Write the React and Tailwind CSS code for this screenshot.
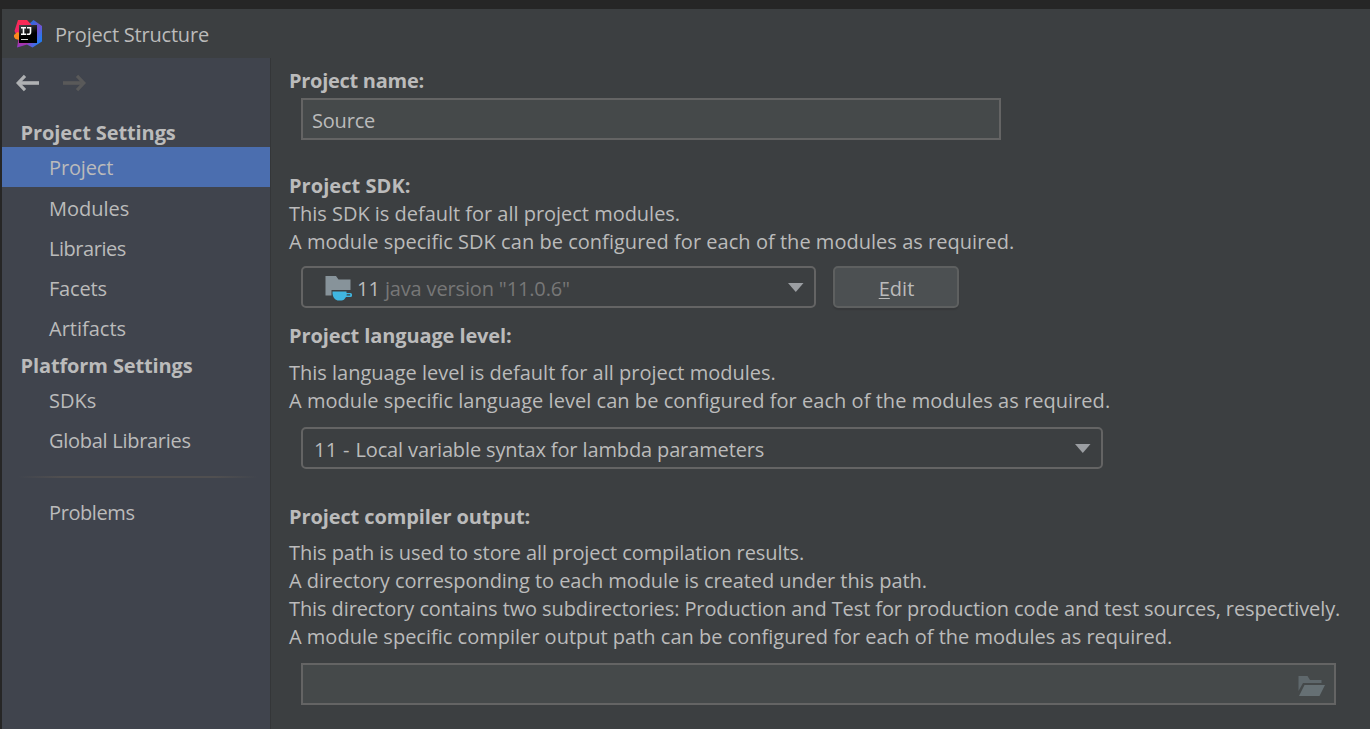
import React from 'react';

function IdeaLogo() {
  return (
    <svg className="block h-[28px] w-[28px]" viewBox="0 0 28 28">
      <defs>
        <linearGradient id="blue" x1="0" y1="0" x2="1" y2="1">
          <stop offset="0" stopColor="#3468dc" />
          <stop offset=".25" stopColor="#3468dc" />
          <stop offset=".55" stopColor="#7650cf" />
          <stop offset=".78" stopColor="#2a78ee" />
          <stop offset="1" stopColor="#197df0" />
        </linearGradient>
        <linearGradient id="pink" x1="0" y1="0" x2="0" y2="1">
          <stop offset="0" stopColor="#fc2b50" />
          <stop offset=".5" stopColor="#ee246f" />
          <stop offset="1" stopColor="#8b3bc4" />
        </linearGradient>
        <linearGradient id="box" x1="0" y1="0" x2=".3" y2="1">
          <stop offset="0" stopColor="#48484b" />
          <stop offset=".65" stopColor="#000" />
        </linearGradient>
      </defs>
      <path d="M14 5 19.500 0 28 6V21.500L18.500 27.500 12 24Z" fill="url(#blue)" />
      <path d="M4 0H13L17.500 5V22L13 24.500 3 27.500 4.500 19 0.500 11Z" fill="url(#pink)" />
      <path d="M0 15 3.500 12 5.500 13V20L1.500 19 0 17Z" fill="#fa8a1d" />
      <rect x="5" y="5" width="18" height="18" fill="url(#box)" />
      <path d="M7 7.800H12M9.500 7.800V14.200M7 14.300H12M13 7.800H16.500V12.300Q16.500 14.300 14.500 14.300H12.700" fill="none" stroke="#fff" strokeWidth="1.600" />
      <path d="M7 19.500H14" stroke="#ddd" strokeWidth="1" />
    </svg>
  );
}

function Arrow({ color, flip }) {
  return (
    <svg className={flip ? 'block h-[18px] w-6 -scale-x-100' : 'block h-[18px] w-6'} viewBox="0 0 24 18">
      <path d="M24 9H4" fill="none" stroke={color} strokeWidth="3.600" />
      <path d="M10 1.900 3.200 9l6.800 7.100" fill="none" stroke={color} strokeWidth="3.200" />
    </svg>
  );
}

function SdkIcon() {
  return (
    <svg className="mt-0.5 block h-[26px] w-[28px] shrink-0" viewBox="0 0 28 26">
      <path d="M.5 1H11L13.500 4.500H25.500V15H6.500V20.500H.5Z" fill="#87939a" />
      <path d="M7.500 16.500H21.500V18H25.500Q27 18 27 19.500V20.500Q27 22 25.500 22H21Q19 25.500 16.500 25.500H12.500Q8 24 7.500 18.500Z" fill="#40b6e0" />
      <path d="M21.800 19.300H25.200V20.600H21.500Z" fill="#3c3f41" />
    </svg>
  );
}

function Caret() {
  return (
    <svg className="mt-px block h-[9px] w-4 shrink-0" viewBox="0 0 16 9">
      <path d="M0 0H15.500L7.800 9Z" fill="#9b9ea2" />
    </svg>
  );
}

function FolderIcon() {
  return (
    <svg className="block h-5 w-[27px]" viewBox="0 0 27 20">
      <path d="M.5 0H9.500L12 4H23.500V7H5L.5 15Z" fill="#5f686c" />
      <path d="M6.500 9H27L21.500 20H1Z" fill="#667074" />
    </svg>
  );
}

function NavItem({ children, active, spacing }) {
  return (
    <div className={`${active ? 'bg-[#4b6eaf] mb-px ' : ''}flex h-10 items-center pl-[47px] pt-0.5 ${spacing}`}>
      {children}
    </div>
  );
}

function Line({ children, spacing }) {
  return (
    <p className="h-7 whitespace-nowrap leading-7">
      <span className={spacing}>{children}</span>
    </p>
  );
}

function Heading({ children, spacing }) {
  return (
    <h2 className="h-7 whitespace-nowrap font-bold leading-7">
      <span className={spacing}>{children}</span>
    </h2>
  );
}

export default function App() {
  return (
    <div className="flex h-[729px] w-[1370px] flex-col overflow-hidden bg-[#262626] pl-0.5 font-['Open_Sans',sans-serif] text-[20px] text-[#bbbbbb]">
      <div className="h-[9px] shrink-0" />
      <header className="flex h-[49px] shrink-0 items-center bg-[#3c3f41] pl-3">
        <IdeaLogo />
        <span className="ml-[13px] pt-0.5 tracking-[-0.2px]">Project Structure</span>
      </header>
      <div className="flex min-h-0 flex-1">
        <aside className="w-[269px] shrink-0 border-r border-[#343638] bg-[#40444d]">
          <div className="flex h-[50px] items-center gap-6 pl-[13px]">
            <Arrow color="#afb1b3" />
            <Arrow color="#595959" flip />
          </div>
          <div className="flex h-[39px] items-end pl-[18.500px] font-bold leading-7">
            <span className="tracking-[-0.1px]">Project Settings</span>
          </div>
          <NavItem active spacing="tracking-[-0.15px]">Project</NavItem>
          <NavItem spacing="">Modules</NavItem>
          <NavItem spacing="tracking-[-0.45px]">Libraries</NavItem>
          <NavItem spacing="tracking-[-0.2px]">Facets</NavItem>
          <NavItem spacing="">Artifacts</NavItem>
          <div className="flex h-8 items-center pl-[18.500px] pt-[3px] font-bold">
            <span className="tracking-[-0.12px]">Platform Settings</span>
          </div>
          <NavItem spacing="">SDKs</NavItem>
          <NavItem spacing="tracking-[-0.28px]">Global Libraries</NavItem>
          <div className="mb-[14px] ml-4 mr-3 mt-4 h-0.5 bg-[linear-gradient(to_right,transparent,#504f50_18%,#504f50_82%,transparent)]" />
          <NavItem spacing="tracking-[-0.4px]">Problems</NavItem>
        </aside>
        <main className="min-w-0 flex-1 bg-[#3c3f41] pl-[18px] pt-[9px]">
          <Heading spacing="tracking-[-0.28px]">Project name:</Heading>
          <div className="ml-3 mt-[3px] flex h-[42px] w-[700px] items-center border-2 border-[#646464] bg-[#45494a] pl-[9px]">
            <span className="pt-[3px] tracking-[-0.2px]">Source</span>
          </div>

          <div className="mt-8">
            <Heading spacing="tracking-[0.05px]">Project SDK:</Heading>
            <Line spacing="tracking-[-0.02px]">This SDK is default for all project modules.</Line>
            <Line spacing="tracking-[0.03px]">A module specific SDK can be configured for each of the modules as required.</Line>
          </div>
          <div className="ml-3 mt-[10px] flex gap-[17px]">
            <div className="flex h-[42px] w-[515px] items-center rounded-[5px] border-2 border-[#646464] pl-[22px] pr-[10px]">
              <SdkIcon />
              <span className="ml-1 pt-[3px]">11</span>
              <span className="ml-[5px] flex-1 pt-[3px] tracking-[-0.15px] text-[#777777]">java version "11.0.6"</span>
              <Caret />
            </div>
            <button className="h-[42px] w-[126px] rounded-[5px] border-2 border-[#5e6060] bg-[#4c5052] pl-px pt-[3px] shadow-[0_2px_1px_#37393b]">
              <u className="decoration-1 underline-offset-2">E</u>dit
            </button>
          </div>

          <div className="mt-[14px]">
            <Heading spacing="tracking-[-0.11px]">Project language level:</Heading>
            <div className="h-[9px]" />
            <Line spacing="">This language level is default for all project modules.</Line>
            <Line spacing="tracking-[0.04px]">A module specific language level can be configured for each of the modules as required.</Line>
          </div>
          <div className="ml-3 mt-3 flex h-[42px] w-[802px] items-center justify-between rounded-[5px] border-2 border-[#646464] pl-[11px] pr-[10px]">
            <span className="pt-[3px] tracking-[-0.13px]"><span className="tracking-[0.35px]">11 - </span>Local variable syntax for lambda parameters</span>
            <Caret />
          </div>

          <div className="mt-[34px]">
            <Heading spacing="tracking-[-0.11px]">Project compiler output:</Heading>
            <div className="h-2" />
            <Line spacing="tracking-[-0.07px]">This path is used to store all project compilation results.</Line>
            <Line spacing="tracking-[-0.06px]">A directory corresponding to each module is created under this path.</Line>
            <Line spacing="tracking-[-0.1px]">This directory contains two subdirectories: Production and Test for production code and test sources, respectively.</Line>
            <Line spacing="">A module specific compiler output path can be configured for each of the modules as required.</Line>
          </div>
          <div className="ml-3 mt-3 flex h-[42px] w-[1035px] items-center justify-end border-2 border-[#646464] bg-[#45494a] pr-[9px] pt-1">
            <FolderIcon />
          </div>
        </main>
      </div>
    </div>
  );
}
